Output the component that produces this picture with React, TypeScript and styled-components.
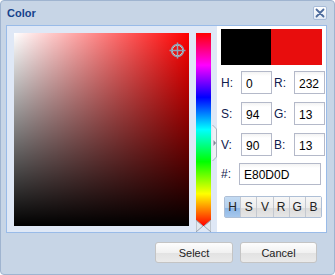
import styled, { createGlobalStyle } from 'styled-components'

const GlobalStyle = createGlobalStyle`
  html, body {
    margin: 0;
    padding: 0;
    background: #ffffff;
  }
  * {
    box-sizing: border-box;
  }
`

const Window = styled.div`
  width: 335px;
  height: 275px;
  display: flex;
  flex-direction: column;
  background: #c7d5e6;
  border: 1px solid #9fb4d0;
  border-radius: 4px;
  font-family: 'Liberation Sans', Arial, sans-serif;
  overflow: hidden;
`

const TitleBar = styled.div`
  height: 24px;
  display: flex;
  align-items: center;
  justify-content: space-between;
  padding: 0 7px 0 6px;
`

const Title = styled.span`
  font-size: 11px;
  font-weight: bold;
  color: #15428b;
`

const CloseButton = styled.button`
  width: 14px;
  height: 14px;
  padding: 0;
  border: 1px solid #a8bcd8;
  border-radius: 2px;
  background: linear-gradient(#ffffff, #e4ecf6);
  display: flex;
  align-items: center;
  justify-content: center;
`

const Body = styled.div`
  margin-left: 5px;
  width: 321px;
  height: 208px;
  display: flex;
  border: 1px solid #99bbe8;
  background: #dfe8f6;
`

const PickerArea = styled.div`
  display: flex;
  gap: 7px;
  padding: 7px 0 6px 7px;
`

const SatVal = styled.div`
  position: relative;
  width: 175px;
  height: 193px;
  background:
    linear-gradient(to top, #000000, rgba(0, 0, 0, 0)),
    linear-gradient(to right, #ffffff, rgba(255, 255, 255, 0)),
    #ff0000;
`

const Crosshair = styled.svg`
  position: absolute;
  left: 155px;
  top: 9px;
`

const HueStrip = styled.div`
  position: relative;
  width: 15px;
  height: 193px;
  background: linear-gradient(
    to bottom,
    #ff0000 0%,
    #ff00ff 16.66%,
    #0000ff 33.33%,
    #00ffff 50%,
    #00ff00 66.66%,
    #ffff00 83.33%,
    #ff0000 100%
  );
`

const HueMarker = styled.svg`
  position: absolute;
  left: 0;
  bottom: -6px;
`

const HandleColumn = styled.div`
  width: 6px;
  padding: 99px 0 0 1px;
`

const SidePanel = styled.div`
  width: 109px;
  background: #ffffff;
  padding: 3px 4px 0 4px;
  display: flex;
  flex-direction: column;
`

const Swatches = styled.div`
  display: flex;
  height: 36px;
`

const Swatch = styled.div<{ $color: string; $w: number }>`
  width: ${p => p.$w}px;
  background: ${p => p.$color};
`

const Fields = styled.div`
  margin-top: 6px;
  display: grid;
  grid-template-columns: 18px 31px 18px 31px;
  column-gap: 2px;
  row-gap: 8px;
  align-items: center;
`

const Label = styled.label`
  font-size: 12px;
  color: #10204e;
`

const Input = styled.input`
  width: 100%;
  height: 23px;
  border: 1px solid #b4b9c9;
  background: linear-gradient(#f3f3f3, #ffffff 4px);
  font-family: 'Liberation Sans', Arial, sans-serif;
  font-size: 12px;
  color: #000000;
  padding: 2px 0 0 4px;
  outline: none;
`

const HexRow = styled.div`
  margin-top: 7px;
  display: grid;
  grid-template-columns: 18px 82px;
  align-items: center;
`

const ModeGroup = styled.div`
  margin: 11px 0 0 3px;
  display: flex;
  width: 98px;
  height: 22px;
  border: 1px solid #aebfd6;
  border-radius: 2px;
`

const ModeButton = styled.button<{ $active?: boolean }>`
  flex: 1;
  padding: 0;
  border: none;
  border-left: 1px solid #c3c8d0;
  &:first-child {
    border-left: none;
  }
  background: ${p =>
    p.$active
      ? 'linear-gradient(#c4dbf2 0%, #b3cfee 55%, #8db7e6 56%, #a6c7ec 100%)'
      : 'linear-gradient(#f7f7f7 0%, #ececec 55%, #dcdcdc 56%, #e6e6e6 100%)'};
  font-family: 'Liberation Sans', Arial, sans-serif;
  font-size: 12px;
  color: #222222;
`

const Footer = styled.div`
  margin-top: 9px;
  display: flex;
  justify-content: flex-end;
  gap: 7px;
  padding-right: 17px;
`

const DialogButton = styled.button<{ $w: number }>`
  width: ${p => p.$w}px;
  height: 21px;
  padding: 0;
  border: 1px solid #c4c4c4;
  border-radius: 3px;
  background: linear-gradient(#fdfdfd 0%, #f1f1f1 50%, #e2e2e2 51%, #eaeaea 100%);
  font-family: 'Liberation Sans', Arial, sans-serif;
  font-size: 11px;
  color: #222222;
`

function App() {
  return (
    <>
      <GlobalStyle />
      <Window>
        <TitleBar>
          <Title>Color</Title>
          <CloseButton aria-label="Close">
            <svg width="10" height="10" viewBox="0 0 10 10">
              <path d="M1.5 1.5 L8.5 8.5 M8.5 1.5 L1.5 8.5" stroke="#4d6b9c" strokeWidth="1.8" strokeLinecap="round" />
            </svg>
          </CloseButton>
        </TitleBar>
        <Body>
          <PickerArea>
            <SatVal>
              <Crosshair width="17" height="17" viewBox="0 0 17 17">
                <circle cx="8.5" cy="8.5" r="5.2" fill="none" stroke="#f1d9c4" strokeWidth="1" />
                <circle cx="8.5" cy="8.5" r="6" fill="none" stroke="#8fa4b8" strokeWidth="1.5" />
                <path d="M8.5 0.5 V16.5 M0.5 8.5 H16.5" stroke="#8fa4b8" strokeWidth="1.5" />
              </Crosshair>
            </SatVal>
            <HueStrip>
              <HueMarker width="15" height="12" viewBox="0 0 15 12">
                <path d="M0 0 L7 6 L0 12 Z" fill="#e2e6ec" stroke="#9aa4b0" strokeWidth="1" />
                <path d="M15 0 L8 6 L15 12 Z" fill="#e2e6ec" stroke="#9aa4b0" strokeWidth="1" />
              </HueMarker>
            </HueStrip>
          </PickerArea>
          <HandleColumn>
            <svg width="5" height="36" viewBox="0 0 5 36">
              <path d="M0.5 0 L4.5 4 V32 L0.5 36" fill="#eef1f5" stroke="#a9b3bf" strokeWidth="1" />
              <path d="M1.5 15 L4 18 L1.5 21 Z" fill="#7d8794" />
            </svg>
          </HandleColumn>
          <SidePanel>
            <Swatches>
              <Swatch $color="#000000" $w={50} />
              <Swatch $color="#e80d0d" $w={51} />
            </Swatches>
            <Fields>
              <Label>H:</Label>
              <Input defaultValue="0" />
              <Label>R:</Label>
              <Input defaultValue="232" />
              <Label>S:</Label>
              <Input defaultValue="94" />
              <Label>G:</Label>
              <Input defaultValue="13" />
              <Label>V:</Label>
              <Input defaultValue="90" />
              <Label>B:</Label>
              <Input defaultValue="13" />
            </Fields>
            <HexRow>
              <Label>#:</Label>
              <Input defaultValue="E80D0D" style={{ height: 22 }} />
            </HexRow>
            <ModeGroup>
              <ModeButton $active>H</ModeButton>
              <ModeButton>S</ModeButton>
              <ModeButton>V</ModeButton>
              <ModeButton>R</ModeButton>
              <ModeButton>G</ModeButton>
              <ModeButton>B</ModeButton>
            </ModeGroup>
          </SidePanel>
        </Body>
        <Footer>
          <DialogButton $w={78}>Select</DialogButton>
          <DialogButton $w={77}>Cancel</DialogButton>
        </Footer>
      </Window>
    </>
  )
}

export default App
